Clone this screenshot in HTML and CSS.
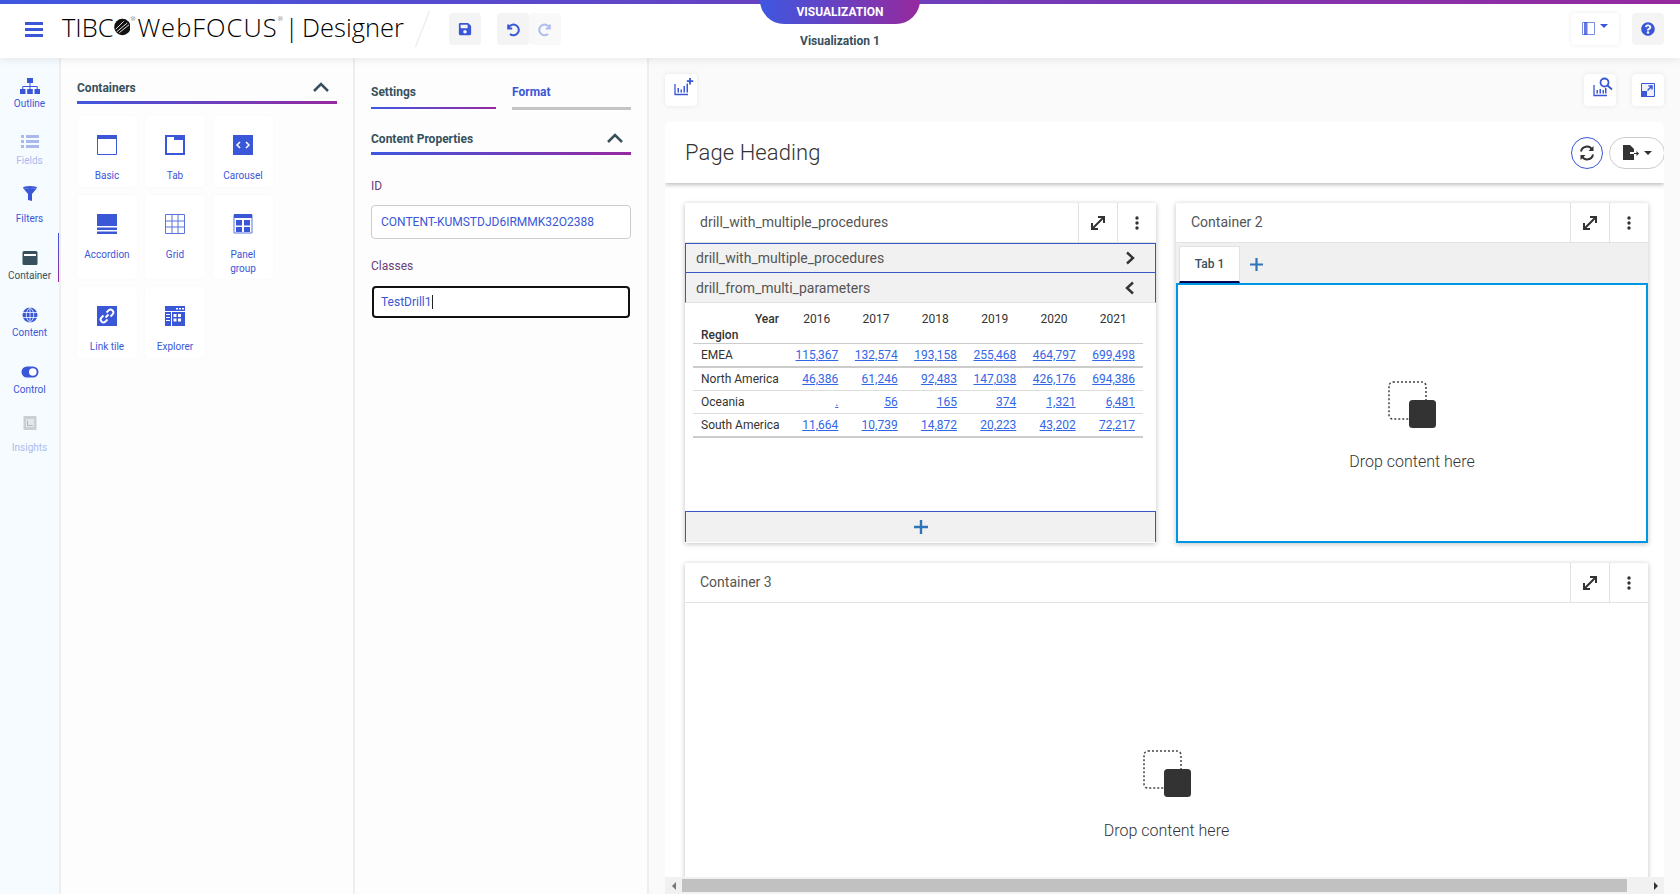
FILE: index.html
```html
<!DOCTYPE html>
<html lang="en">
<head>
  <meta charset="UTF-8" />
  <title>WebFOCUS Designer</title>
  <link rel="stylesheet" href="styles.css">
</head>
<body>
  <header class="topbar">
    <div class="top-left">
      <svg class="burger" width="18" height="15" viewBox="0 0 18 15"><path fill="#3a57d8" d="M0 0h18v3H0zM0 6h18v3H0zM0 12h18v3H0z"/></svg>
      <div class="logo">
        <span>TIBC</span><svg class="logo-mark" width="20" height="20" viewBox="0 0 19 19"><circle cx="9.5" cy="9.5" r="9.300" fill="#111"/><path d="M3 15 15 5M6 16 17 7M2 12 11 3" stroke="#fff" stroke-width="1" fill="none"/></svg><sup>®</sup><span class="logo-web">WebFOCUS</span><sup>®</sup><span class="logo-rest">| Designer</span>
      </div>
      <svg class="slash" width="15" height="36" viewBox="0 0 15 36"><path d="M14.5 0 .5 36" stroke="#eee" stroke-width="1.5"/></svg>
      <button class="tool tool-grey">
        <svg width="14" height="14" viewBox="0 0 448 512"><path fill="#3a57d8" d="M433.941 129.941l-83.882-83.882A48 48 0 0 0 316.118 32H48C21.49 32 0 53.49 0 80v352c0 26.51 21.49 48 48 48h352c26.51 0 48-21.49 48-48V163.882a48 48 0 0 0-14.059-33.941zM224 416c-35.346 0-64-28.654-64-64 0-35.346 28.654-64 64-64s64 28.654 64 64c0 35.346-28.654 64-64 64zm96-304.52V212c0 6.627-5.373 12-12 12H76c-6.627 0-12-5.373-12-12V108c0-6.627 5.373-12 12-12h228.52c3.183 0 6.235 1.264 8.485 3.515l3.48 3.48A11.996 11.996 0 0 1 320 111.48z"/></svg>
      </button>
      <div class="tool-group">
        <button class="tool tool-grey">
          <svg width="16" height="16" viewBox="0 0 16 16"><path d="M3.2 3.5v4h4M3.4 7.4A5.3 5.3 0 1 1 5 12.9" fill="none" stroke="#3a57d8" stroke-width="2"/></svg>
        </button>
        <button class="tool tool-pale">
          <svg width="16" height="16" viewBox="0 0 16 16"><path d="M12.8 3.5v4h-4M12.6 7.4A5.3 5.3 0 1 0 11 12.9" fill="none" stroke="#aebcf0" stroke-width="2"/></svg>
        </button>
      </div>
    </div>
    <div class="top-center">
      <div class="mode-tab">VISUALIZATION</div>
      <div class="doc-name">Visualization 1</div>
    </div>
    <div class="top-right">
      <button class="tool tool-card tool-wide">
        <svg width="13" height="13" viewBox="0 0 13 13"><path d="M.5.5h12v12H.5z" fill="none" stroke="#7d90e6"/><path d="M2 0h3.500v13H2z" fill="#3a57d8" opacity=".8"/></svg>
        <span class="caret caret-blue"></span>
      </button>
      <button class="tool tool-grey tool-last">
        <svg width="14" height="14" viewBox="0 0 512 512"><path fill="#3a57d8" d="M504 256c0 136.997-111.043 248-248 248S8 392.997 8 256C8 119.083 119.043 8 256 8s248 111.083 248 248zM262.655 90c-54.497 0-89.255 22.957-116.549 63.758-3.536 5.286-2.353 12.415 2.715 16.258l34.699 26.31c5.205 3.947 12.621 3.008 16.665-2.122 17.864-22.658 30.113-35.797 57.303-35.797 20.429 0 45.698 13.148 45.698 32.958 0 14.976-12.363 22.667-32.534 33.976C247.128 238.528 216 254.941 216 296v4c0 6.627 5.373 12 12 12h56c6.627 0 12-5.373 12-12v-1.333c0-28.462 83.186-29.647 83.186-106.667 0-58.002-60.165-102-116.531-102zM256 338c-25.365 0-46 20.635-46 46 0 25.364 20.635 46 46 46s46-20.636 46-46c0-25.365-20.635-46-46-46z"/></svg>
      </button>
    </div>
  </header>

  <div class="workspace">
    <nav class="rail">
      <div class="rail-item">
        <svg width="20" height="16" viewBox="0 0 20 16"><path fill="#3a57d8" d="M7 0h6v5H7zM0 11h5.500v5H0zM7.200 11h5.600v5H7.200zM14.500 11H20v5h-5.500z"/><path d="M10 5v3.500M2.800 11V8.500h14.400V11M10 8.500V11" fill="none" stroke="#3a57d8"/></svg>
        <span>Outline</span>
      </div>
      <div class="rail-item rail-off rail-nudge">
        <svg width="20" height="16" viewBox="0 0 20 16"><path fill="#3a57d8" d="M1 2h3v3H1zM6 2h13v3H6zM1 7h3v3H1zM6 7h13v3H6zM1 12h3v3H1zM6 12h13v3H6z"/></svg>
        <span>Fields</span>
      </div>
      <div class="rail-item rail-raised">
        <svg width="20" height="16" viewBox="0 0 20 16"><ellipse cx="10" cy="1.500" rx="7" ry="1.500" fill="#3a57d8"/><path fill="#3a57d8" d="M3 2c2 1 12 1 14 0l-5 6v7l-4-1V8z"/></svg>
        <span>Filters</span>
      </div>
      <div class="rail-item rail-active">
        <svg width="20" height="16" viewBox="0 0 20 16"><rect x="2.500" y="1" width="15" height="14" rx="1.500" fill="#37505c"/><path fill="#fff" d="M4 4h12v2H4z"/></svg>
        <span>Container</span>
      </div>
      <div class="rail-item">
        <svg width="20" height="16" viewBox="0 0 20 16"><circle cx="10" cy="8" r="7.500" fill="#3a57d8"/><path d="M2.500 5.500h15M2.500 10.500h15M10 .5v15M10 .5c-5 4-5 11 0 15M10 .5c5 4 5 11 0 15" fill="none" stroke="#f5fbff" stroke-width=".8"/></svg>
        <span>Content</span>
      </div>
      <div class="rail-item">
        <svg width="20" height="16" viewBox="0 0 20 16"><rect x="1.500" y="2.500" width="17" height="11" rx="5.500" fill="#3a57d8"/><circle cx="12.800" cy="8" r="3.800" fill="#fff"/></svg>
        <span>Control</span>
      </div>
      <div class="rail-item rail-off rail-raised">
        <svg width="20" height="16" viewBox="0 0 20 16"><rect x="3.500" y="1" width="13" height="14" fill="#8a8f99"/><rect x="6" y="4" width="8" height="8" fill="#c8cbd0"/><path d="M7.500 5.500v5h5" fill="none" stroke="#555" stroke-width="1"/></svg>
        <span>Insights</span>
      </div>
    </nav>

    <aside class="panel">
      <div class="section-head">
        <span>Containers</span>
        <svg class="chevron-up" width="16" height="10" viewBox="0 0 16 10"><path d="M1 9l7-7 7 7" fill="none" stroke="#37505c" stroke-width="2.500"/></svg>
      </div>
      <div class="tiles">
        <div class="tile">
          <svg width="20" height="20" viewBox="0 0 20 20"><path d="M.5.5h19v19H.5z" fill="#fff" stroke="#3a57d8"/><path d="M0 0h20v4H0z" fill="#3a57d8"/></svg>
          <span>Basic</span>
        </div>
        <div class="tile">
          <svg width="20" height="20" viewBox="0 0 20 20"><path d="M1 1h18v18H1z" fill="#fff" stroke="#3a57d8" stroke-width="2"/><path d="M9 0h11v5H9z" fill="#3a57d8"/><path d="M0 0h9v2H0z" fill="#3a57d8"/></svg>
          <span>Tab</span>
        </div>
        <div class="tile">
          <svg width="20" height="20" viewBox="0 0 20 20"><path d="M0 0h20v20H0z" fill="#3a57d8"/><path d="M7 7l-3 3 3 3M13 7l3 3-3 3" fill="none" stroke="#fff" stroke-width="1.500"/></svg>
          <span>Carousel</span>
        </div>
        <div class="tile">
          <svg width="20" height="20" viewBox="0 0 20 20"><path d="M0 0h20v12H0zM0 13.500h20v2.500H0zM0 17.500h20V20H0z" fill="#3a57d8"/></svg>
          <span>Accordion</span>
        </div>
        <div class="tile">
          <svg width="20" height="20" viewBox="0 0 20 20"><path d="M.5.5h19v19H.5zM7 .5v19M13 .5v19M.5 7h19M.5 13h19" fill="none" stroke="#5b74e0"/></svg>
          <span>Grid</span>
        </div>
        <div class="tile">
          <svg width="20" height="20" viewBox="0 0 20 20"><path d="M1 1h18v18H1z" fill="#fff" stroke="#5b74e0"/><path d="M1 0h18v4H1zM3 6h6v5.500H3zM11 6h6v5.500h-6zM3 13h6v5H3zM11 13h6v5h-6z" fill="#3a57d8"/></svg>
          <span class="tile-wrap">Panel group</span>
        </div>
        <div class="tile">
          <svg width="20" height="20" viewBox="0 0 20 20"><path d="M0 0h20v20H0z" fill="#3a57d8"/><path d="M8.500 11.500l3-3M9.500 6.500l2-2a2.800 2.800 0 0 1 4 4l-2 2M10.500 13.500l-2 2a2.800 2.800 0 0 1-4-4l2-2" fill="none" stroke="#fff" stroke-width="1.800"/></svg>
          <span>Link tile</span>
        </div>
        <div class="tile">
          <svg width="20" height="20" viewBox="0 0 20 20"><path d="M0 0h20v20H0z" fill="#3a57d8"/><path d="M11 2h2v1.500h-2zM14 2h2v1.500h-2zM17 2h2v1.500h-2zM0 5h20v1H0zM6 6h1v14H6zM8.500 8h3v3h-3zM13 8h3v3h-3zM8.500 12.500h3v3h-3zM13 12.500h3v3h-3zM1 8h4v1H1zM1 11h4v1H1zM1 14h4v1H1z" fill="#fff"/></svg>
          <span>Explorer</span>
        </div>
      </div>
    </aside>

    <aside class="props">
      <div class="prop-tabs">
        <div class="prop-tab prop-tab-on">Settings</div>
        <div class="prop-tab prop-tab-off">Format</div>
      </div>
      <div class="section-head">
        <span>Content Properties</span>
        <svg class="chevron-up" width="16" height="10" viewBox="0 0 16 10"><path d="M1 9l7-7 7 7" fill="none" stroke="#37505c" stroke-width="2.500"/></svg>
      </div>
      <label class="field-label">ID</label>
      <div class="field">CONTENT-KUMSTDJD6IRMMK32O2388</div>
      <label class="field-label field-label-second">Classes</label>
      <div class="field field-focus">TestDrill1<span class="text-cursor"></span></div>
    </aside>

    <main class="canvas">
      <div class="canvas-tools">
        <button class="tool tool-card">
          <svg class="chart-icon" width="20" height="18" viewBox="0 0 20 18"><path d="M1 6v10.500h13" fill="none" stroke="#3a57d8" stroke-width="1.300"/><path d="M3.500 10h1.500v4.500H3.500zM6.500 11.500H8v3H6.500zM9.500 8H11v6.500H9.500zM12.500 5.500H14v9h-1.500z" fill="#3a57d8"/><path d="M16 0v6.500M12.800 3.200h6.400" stroke="#3a57d8" stroke-width="1.800"/></svg>
        </button>
        <div class="canvas-tools-right">
          <button class="tool tool-card">
            <svg class="chart-icon" width="20" height="20" viewBox="0 0 20 20"><path d="M1 8v10.500h13" fill="none" stroke="#3a57d8" stroke-width="1.300"/><path d="M3.500 13H5v3.500H3.500zM6.500 12H8v4.500H6.500zM9.500 13H11v3.500H9.500zM12 11h1.500v5.500H12z" fill="#3a57d8"/><circle cx="11.500" cy="5.500" r="4" fill="none" stroke="#3a57d8" stroke-width="1.800"/><path d="M14.500 8.500l4.500 4" stroke="#3a57d8" stroke-width="1.800"/></svg>
          </button>
          <button class="tool tool-card">
            <svg width="14" height="14" viewBox="0 0 14 14"><path d="M.5.5h13v13H.5z" fill="#eef1fc" stroke="#3a57d8"/><path d="M0 8h6v6H0z" fill="#3a57d8"/><path d="M6.500 7.500l4.500-4.500M7.500 3h3.500v3.500" fill="none" stroke="#3a57d8" stroke-width="1.500"/></svg>
          </button>
        </div>
      </div>

      <section class="page">
        <div class="page-head">
          <h1>Page Heading</h1>
          <button class="round-btn">
            <svg width="16" height="16" viewBox="0 0 16 16"><path d="M2 6.500A6 6 0 0 1 13 4.500M14 9.500A6 6 0 0 1 3 11.500" fill="none" stroke="#333" stroke-width="2"/><path d="M14.500 1v5h-5zM1.500 15v-5h5z" fill="#333"/></svg>
          </button>
          <button class="pill-btn">
            <svg width="16" height="15" viewBox="0 0 16 15"><path d="M0 0h7l4 4v3H7v2h4v6H0z" fill="#333"/><path d="M11 8h2.500V6l2.500 2.500-2.500 2.500V9H11z" fill="#333"/></svg>
            <span class="caret caret-dark"></span>
          </button>
        </div>

        <div class="page-body">
          <article class="card">
            <div class="card-head">
              <span class="card-title">drill_with_multiple_procedures</span>
              <button class="card-btn"><svg width="16" height="16" viewBox="0 0 16 16"><path d="M3 13 13 3M8 2h6v6M2 8v6h6" fill="none" stroke="#333" stroke-width="2"/></svg></button>
              <button class="card-btn"><svg width="4" height="14" viewBox="0 0 4 14"><circle cx="2" cy="2" r="1.700" fill="#333"/><circle cx="2" cy="7" r="1.700" fill="#333"/><circle cx="2" cy="12" r="1.700" fill="#333"/></svg></button>
            </div>
            <div class="acc-row">
              <span>drill_with_multiple_procedures</span>
              <svg width="10" height="14" viewBox="0 0 10 14"><path d="M2 1.500l6 5.500-6 5.500" fill="none" stroke="#333" stroke-width="2.400"/></svg>
            </div>
            <div class="acc-row acc-row-open">
              <span>drill_from_multi_parameters</span>
              <svg width="10" height="14" viewBox="0 0 10 14"><path d="M8 1.500 2 7l6 5.500" fill="none" stroke="#333" stroke-width="2.400"/></svg>
            </div>
            <div class="report">
              <table>
                <tr class="row-years"><th class="row-label">Year</th><td>2016</td><td>2017</td><td>2018</td><td>2019</td><td>2020</td><td>2021</td></tr>
                <tr class="row-region"><th>Region</th><td colspan="6"></td></tr>
                <tr class="row-thick"><td>EMEA</td><td class="num"><a>115,367</a></td><td class="num"><a>132,574</a></td><td class="num"><a>193,158</a></td><td class="num"><a>255,468</a></td><td class="num"><a>464,797</a></td><td class="num"><a>699,498</a></td></tr>
                <tr><td>North America</td><td class="num"><a>46,386</a></td><td class="num"><a>61,246</a></td><td class="num"><a>92,483</a></td><td class="num"><a>147,038</a></td><td class="num"><a>426,176</a></td><td class="num"><a>694,386</a></td></tr>
                <tr><td>Oceania</td><td class="num"><a>.</a></td><td class="num"><a>56</a></td><td class="num"><a>165</a></td><td class="num"><a>374</a></td><td class="num"><a>1,321</a></td><td class="num"><a>6,481</a></td></tr>
                <tr class="row-thick"><td>South America</td><td class="num"><a>11,664</a></td><td class="num"><a>10,739</a></td><td class="num"><a>14,872</a></td><td class="num"><a>20,223</a></td><td class="num"><a>43,202</a></td><td class="num"><a>72,217</a></td></tr>
              </table>
            </div>
            <div class="acc-add">
              <svg width="14" height="14" viewBox="0 0 14 14"><path d="M7 0v14M0 7h14" stroke="#2f74b8" stroke-width="2.400"/></svg>
            </div>
          </article>

          <article class="card">
            <div class="card-head">
              <span class="card-title">Container 2</span>
              <button class="card-btn"><svg width="16" height="16" viewBox="0 0 16 16"><path d="M3 13 13 3M8 2h6v6M2 8v6h6" fill="none" stroke="#333" stroke-width="2"/></svg></button>
              <button class="card-btn"><svg width="4" height="14" viewBox="0 0 4 14"><circle cx="2" cy="2" r="1.700" fill="#333"/><circle cx="2" cy="7" r="1.700" fill="#333"/><circle cx="2" cy="12" r="1.700" fill="#333"/></svg></button>
            </div>
            <div class="tab-strip">
              <div class="tab-item">Tab 1</div>
              <svg class="tab-add" width="13" height="13" viewBox="0 0 13 13"><path d="M6.500 0v13M0 6.500h13" stroke="#2f74b8" stroke-width="2.200"/></svg>
            </div>
            <div class="drop-box drop-selected">
              <svg width="48" height="47" viewBox="0 0 48 47"><rect x="1" y="1" width="37" height="37" rx="4" fill="none" stroke="#444" stroke-width="1.500" stroke-dasharray="2 2"/><rect x="21" y="19" width="27" height="28" rx="3.500" fill="#333"/></svg>
              <p>Drop content here</p>
            </div>
          </article>

          <article class="card card-full">
            <div class="card-head">
              <span class="card-title">Container 3</span>
              <button class="card-btn"><svg width="16" height="16" viewBox="0 0 16 16"><path d="M3 13 13 3M8 2h6v6M2 8v6h6" fill="none" stroke="#333" stroke-width="2"/></svg></button>
              <button class="card-btn"><svg width="4" height="14" viewBox="0 0 4 14"><circle cx="2" cy="2" r="1.700" fill="#333"/><circle cx="2" cy="7" r="1.700" fill="#333"/><circle cx="2" cy="12" r="1.700" fill="#333"/></svg></button>
            </div>
            <div class="drop-box drop-plain">
              <svg width="48" height="47" viewBox="0 0 48 47"><rect x="1" y="1" width="37" height="37" rx="4" fill="none" stroke="#444" stroke-width="1.500" stroke-dasharray="2 2"/><rect x="21" y="19" width="27" height="28" rx="3.500" fill="#333"/></svg>
              <p>Drop content here</p>
            </div>
          </article>
        </div>
      </section>

      <div class="hscroll">
        <span class="arrow arrow-left"></span>
        <div class="hscroll-track"><div class="hscroll-thumb"></div></div>
        <span class="arrow arrow-right"></span>
      </div>
    </main>
  </div>
</body>
</html>
```

FILE: styles.css
```css
* {
  box-sizing: border-box;
}
html, body {
  height: 100%;
}
body {
  margin: 0;
  font-family: Roboto, Arial, sans-serif;
  color: #333;
  background: #fafafa;
  overflow: hidden;
  display: flex;
  flex-direction: column;
}
button {
  font: inherit;
  border: none;
  padding: 0;
  background: none;
}
.topbar {
  height: 58px;
  flex: none;
  display: flex;
  position: relative;
  z-index: 2;
  background: linear-gradient(90deg, #3f57e0, #96299e) top / 100% 4px no-repeat, #fff;
  box-shadow: 0 2px 8px rgba(0, 0, 0, .08);
}
.top-left, .top-right {
  flex: 1 1 0;
  display: flex;
  align-items: center;
}
.top-right {
  justify-content: flex-end;
  gap: 13px;
}
.tool-last {
  margin-right: 16px;
}
.burger {
  margin: 0 19px 0 25px;
}
.logo {
  display: flex;
  align-items: center;
  font-family: "Open Sans", sans-serif;
  font-size: 25.5px;
  font-weight: 300;
  color: #000;
  white-space: nowrap;
  width: 342px;
  margin-right: 11px;
  padding-bottom: 4px;
}
.logo sup {
  font-size: 6px;
  align-self: flex-start;
  margin-top: 6px;
  line-height: 1;
}
.logo-web {
  margin-left: 2px;
  letter-spacing: 1px;
}
.logo-rest {
  margin-left: 2px;
  word-spacing: -3px;
}
.slash {
  margin-right: 19px;
}
.tool {
  width: 32px;
  height: 32px;
  border-radius: 4px;
  display: inline-flex;
  align-items: center;
  justify-content: center;
  flex: none;
}
.tool-grey {
  background: #f4f4f4;
}
.tool-pale {
  background: #f9f9f9;
}
.tool-card {
  background: #fff;
  box-shadow: 0 0 5px rgba(0, 0, 0, .08);
}
.tool-wide {
  width: 48px;
  gap: 5px;
  padding-bottom: 2px;
}
.tool-group {
  display: flex;
  margin-left: 16px;
}
.chart-icon {
  margin: 0 0 6px 5px;
}
.caret {
  width: 0;
  height: 0;
  border-left: 4px solid transparent;
  border-right: 4px solid transparent;
}
.caret-blue {
  border-top: 4px solid #3a57d8;
  margin-bottom: 4px;
}
.caret-dark {
  border-top: 4px solid #333;
}
.top-center {
  width: 160px;
  flex: none;
  display: flex;
  flex-direction: column;
  align-items: center;
}
.mode-tab {
  width: 160px;
  height: 24px;
  line-height: 24px;
  text-align: center;
  color: #fff;
  font-size: 12px;
  font-weight: 700;
  border-radius: 0 0 24px 24px;
  background: linear-gradient(90deg, #3f57e0, #96299e);
}
.doc-name {
  margin-top: 10px;
  font-size: 12px;
  font-weight: 700;
  color: #37505c;
}
.workspace {
  flex: 1;
  display: flex;
  min-height: 0;
}
.rail {
  width: 61px;
  flex: none;
  background: #f5fbff;
  border-right: 2px solid #eee;
  padding-top: 18px;
}
.rail-item {
  height: 57.3px;
  position: relative;
  display: flex;
  flex-direction: column;
  align-items: center;
  padding-top: 2px;
  color: #3a57d8;
  font-size: 10px;
}
.rail-item span {
  margin-top: 4px;
  line-height: 12px;
}
.rail-nudge svg {
  margin-top: -2px;
}
.rail-nudge span {
  margin-top: 6px;
}
.rail-raised svg {
  margin-top: -7px;
}
.rail-raised span {
  margin-top: 11px;
}
.rail-off {
  opacity: .4;
}
.rail-active {
  color: #37505c;
}
.rail-active::after {
  content: "";
  position: absolute;
  right: 0;
  top: -15px;
  width: 1px;
  height: 49px;
  background: linear-gradient(#3f57e0, #96299e);
}
.panel {
  width: 294px;
  flex: none;
  background: #fdfdfd;
  border-right: 2px solid #eee;
  padding: 19px 16px 0 16px;
}
.props {
  width: 294px;
  flex: none;
  background: #fdfdfd;
  border-right: 2px solid #eee;
  padding: 0 16px;
}
.section-head {
  height: 27px;
  display: flex;
  justify-content: space-between;
  align-items: flex-start;
  padding: 4px 8px 0 0;
  font-size: 12px;
  font-weight: 700;
  color: #37505c;
  border-bottom: 3px solid;
  border-image: linear-gradient(90deg, #3f57e0, #96299e) 1;
  line-height: 14px;
}
.chevron-up {
  margin-top: 1px;
}
.tiles {
  display: grid;
  grid-template-columns: repeat(3, 60px);
  gap: 8px;
  margin-top: 12px;
}
.tile {
  background: #fff;
  border-radius: 4px;
  box-shadow: 0 0 3px rgba(0, 0, 0, .03);
  min-height: 71px;
  padding: 19px 0 3px;
  display: flex;
  flex-direction: column;
  align-items: center;
  text-align: center;
  color: #3a57d8;
  font-size: 10px;
  line-height: 14px;
}
.tile span {
  margin-top: 14px;
}
.tile .tile-wrap {
  width: 36px;
}
.prop-tabs {
  display: flex;
  gap: 16px;
  padding-top: 27px;
  margin-bottom: 18px;
}
.prop-tab {
  font-size: 12px;
  font-weight: 700;
  line-height: 14px;
  height: 24px;
}
.prop-tab-on {
  width: 125px;
  color: #37505c;
  border-bottom: 2px solid;
  border-image: linear-gradient(90deg, #3f57e0, #96299e) 1;
}
.prop-tab-off {
  flex: 1;
  color: #3a57d8;
  border-bottom: 3px solid #c4c4c4;
  height: 25px;
}
.field-label {
  display: block;
  margin-top: 24px;
  font-size: 12px;
  line-height: 14px;
  color: #6a3f7a;
}
.field-label-second {
  margin-top: 20px;
}
.field {
  margin-top: 12px;
  height: 34px;
  line-height: 33px;
  padding-left: 9px;
  background: #fff;
  border: 1px solid #ccc;
  border-radius: 4px;
  font-size: 12px;
  color: #3a57d8;
}
.field-focus {
  margin: 13px 1px 0;
  height: 32px;
  line-height: 28px;
  padding-left: 7px;
  border: 2px solid #111;
}
.text-cursor {
  display: inline-block;
  width: 1px;
  height: 14px;
  background: #222;
  vertical-align: -3px;
}
.canvas {
  flex: 1;
  position: relative;
  min-width: 0;
  overflow: hidden;
  padding: 16px 16px 0;
  background: #fafafa;
}
.canvas-tools {
  display: flex;
  justify-content: space-between;
  height: 32px;
  margin-bottom: 16px;
}
.canvas-tools-right {
  display: flex;
  gap: 16px;
}
.page {
  background: #fff;
}
.page-head {
  height: 61px;
  display: flex;
  align-items: center;
  padding-left: 20px;
  background: #fff;
  border-radius: 4px 4px 0 0;
  box-shadow: 0 2px 4px rgba(0, 0, 0, .25);
  position: relative;
  overflow: hidden;
  clip-path: inset(0 0 -8px 0);
}
.page-head h1 {
  flex: 1;
  margin: 0;
  font-size: 22px;
  font-weight: 300;
  letter-spacing: .1px;
  color: #333;
}
.round-btn {
  width: 32px;
  height: 32px;
  border-radius: 50%;
  border: 1px solid #3a57d8;
  display: flex;
  align-items: center;
  justify-content: center;
}
.pill-btn {
  width: 56px;
  height: 32px;
  margin: 0 -1px 0 6px;
  border: 1px solid #ccc;
  border-radius: 16px;
  display: flex;
  align-items: center;
  justify-content: center;
  gap: 5px;
}
.page-body {
  display: grid;
  grid-template-columns: 471px 472px;
  gap: 20px;
  padding: 20px 16px 0 20px;
}
.card {
  background: #fff;
  box-shadow: 0 1px 5px rgba(0, 0, 0, .25);
}
.card-full {
  grid-column: span 2;
}
.card-head {
  height: 40px;
  display: flex;
  align-items: stretch;
  border-bottom: 1px solid #e2e2e2;
}
.card-title {
  flex: 1;
  padding: 0 0 2px 15px;
  align-self: center;
  font-size: 14px;
  color: #555;
}
.card-btn {
  width: 39px;
  display: flex;
  align-items: center;
  justify-content: center;
  border-left: 1px solid #e2e2e2;
}
.acc-row {
  height: 30px;
  display: flex;
  align-items: center;
  justify-content: space-between;
  padding: 0 20px 0 10px;
  font-size: 14px;
  color: #555;
  background: #f1f1f1;
  border: 1px solid #3a57c8;
}
.acc-row + .acc-row {
  border-top: none;
  border-bottom-color: #e2e2e2;
}
.report {
  height: 208px;
  padding: 8px 13px 0 8px;
}
.report table {
  width: 450px;
  table-layout: fixed;
  border-collapse: collapse;
  font-size: 12px;
  color: #333;
}
.report td, .report th {
  padding: 0 8px;
  white-space: nowrap;
}
.report th {
  font-weight: 500;
  text-align: left;
}
.report th.row-label {
  width: 94px;
  text-align: right;
}
.report tr {
  height: 23px;
  border-bottom: 1px solid #ddd;
}
.report tr.row-years {
  height: 16px;
  border-bottom: none;
}
.row-years td {
  text-align: center;
}
.report tr.row-region {
  height: 16px;
  border-bottom: 1px solid #ccc;
}
.report tr.row-thick {
  height: 24px;
  border-bottom: 2px solid #ccc;
}
.report td.num {
  text-align: right;
}
.report a {
  color: #3366e6;
  text-decoration: underline;
}
.acc-add {
  height: 31px;
  display: flex;
  align-items: center;
  justify-content: center;
  background: #f1f1f1;
  border: 1px solid #3a57c8;
  border-bottom: none;
}
.tab-strip {
  height: 40px;
  display: flex;
  background: #f0f0f0;
  padding: 3px 0 0 3px;
  align-items: flex-end;
}
.tab-item {
  width: 61px;
  height: 37px;
  background: #fff;
  border: 1px solid #e2e2e2;
  border-bottom: 2px solid #07074e;
  text-align: center;
  line-height: 34px;
  font-size: 12px;
  font-weight: 500;
  color: #37505c;
}
.tab-add {
  margin: 0 0 12px 10px;
}
.drop-box {
  display: flex;
  flex-direction: column;
  align-items: center;
}
.drop-box p {
  margin: 24px 0 0;
  font-size: 16px;
  font-weight: 300;
  color: #333;
  line-height: 20px;
}
.drop-selected {
  height: 260px;
  padding-top: 96px;
  border: 2px solid #0096e6;
}
.drop-plain {
  height: 460px;
  padding-top: 147px;
}
.hscroll {
  position: absolute;
  left: 16px;
  right: 16px;
  bottom: 0;
  height: 17px;
  display: flex;
  align-items: center;
  background: #f1f1f1;
}
.hscroll-track {
  flex: 1;
}
.hscroll-thumb {
  width: 945px;
  height: 13px;
  background: #c1c1c1;
}
.arrow {
  width: 17px;
  flex: none;
  display: flex;
  justify-content: center;
}
.arrow::before {
  content: "";
  border-top: 4px solid transparent;
  border-bottom: 4px solid transparent;
}
.arrow-left::before {
  border-right: 4px solid #777;
}
.arrow-right::before {
  border-left: 4px solid #333;
}
```
